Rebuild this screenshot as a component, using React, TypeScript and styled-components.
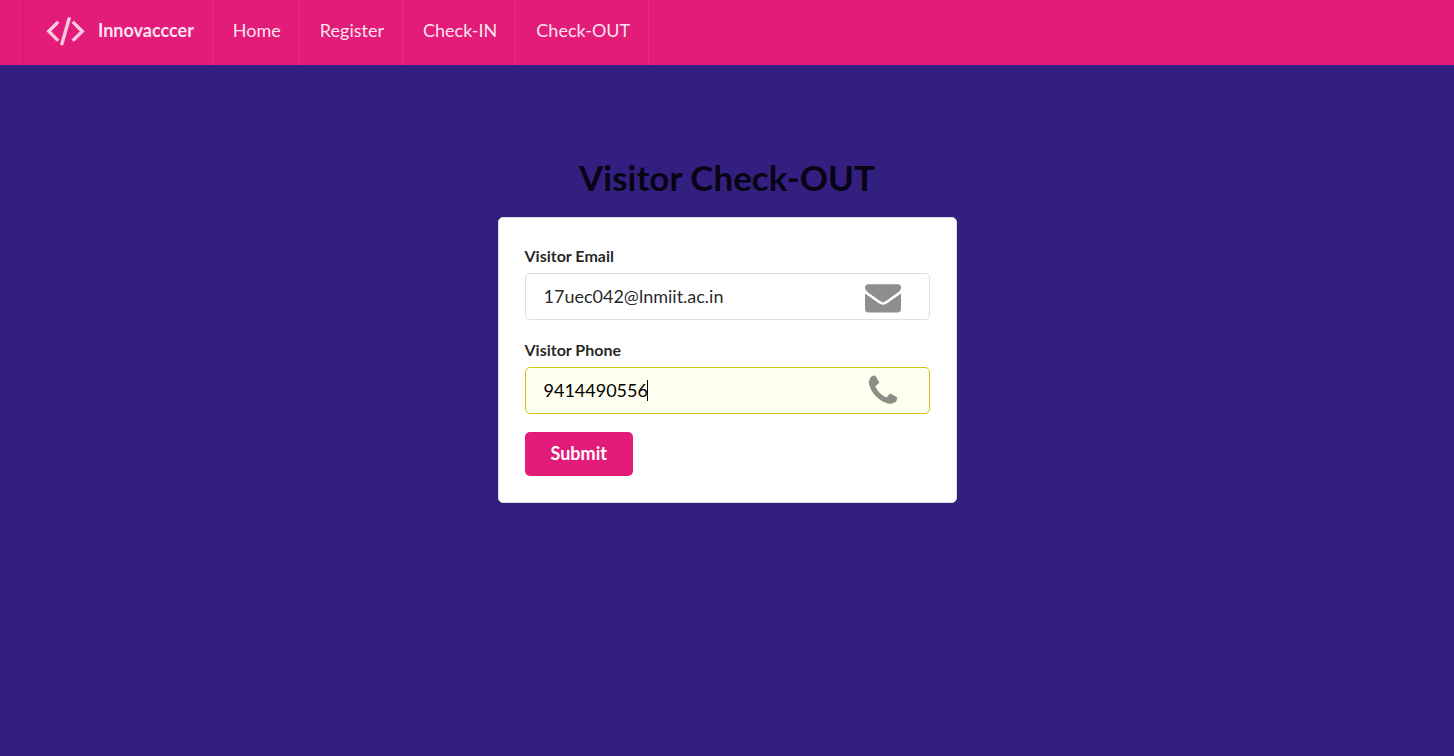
import React, { useState } from "react";
import styled, { createGlobalStyle } from "styled-components";

const GlobalStyle = createGlobalStyle`
  *, *::before, *::after {
    box-sizing: border-box;
  }

  body {
    margin: 0;
    min-height: 100vh;
    background: #331f7f;
    color: rgba(0, 0, 0, 0.87);
    font-family: Lato, "Liberation Sans", sans-serif;
    font-size: 18px;
  }
`;

const NavBar = styled.nav`
  display: flex;
  height: 65px;
  padding-left: 23px;
  background: #e31c79;
`;

const NavItem = styled.a<{ $brand?: boolean }>`
  display: flex;
  align-items: center;
  gap: 13px;
  padding: 0 18px 5px ${(p) => (p.$brand ? "22px" : "20px")};
  border-right: 1px solid rgba(255, 255, 255, 0.08);
  border-left: ${(p) => (p.$brand ? "1px solid rgba(0, 0, 0, 0.06)" : "none")};
  color: rgba(255, 255, 255, 0.9);
  font-weight: ${(p) => (p.$brand ? 700 : 400)};
  line-height: 24px;
  text-decoration: none;
`;

const BrandIcon = styled.svg`
  width: 39px;
  height: 36px;
  fill: currentColor;
  stroke: currentColor;
  stroke-width: 40;
  opacity: 0.85;
`;

const Main = styled.main`
  display: flex;
  flex-direction: column;
  align-items: center;
  padding: 90px 16px;
`;

const Title = styled.h1`
  margin: 0 0 18px;
  color: rgba(0, 0, 0, 0.87);
  font-size: 35px;
  font-weight: 700;
  line-height: 44px;
`;

const Card = styled.form`
  width: 100%;
  max-width: 459px;
  padding: 26px;
  border: 1px solid #dededf;
  border-radius: 5px;
  background: #fff;
  box-shadow: 0 1px 2px rgba(34, 36, 38, 0.15);
`;

const Field = styled.div`
  margin-bottom: 18px;
`;

const Label = styled.label`
  display: block;
  margin-bottom: 5px;
  font-size: 16px;
  font-weight: 700;
  line-height: 24px;
`;

const InputWrap = styled.div`
  position: relative;
`;

const TextInput = styled.input<{ $filled?: boolean }>`
  display: block;
  width: 100%;
  height: 47px;
  padding: 0 72px 2px 18px;
  border: 1px solid ${(p) => (p.$filled ? "#d5c315" : "rgba(34, 36, 38, 0.15)")};
  border-radius: 5px;
  outline: none;
  background: ${(p) => (p.$filled ? "#fffff0" : "#fff")};
  color: ${(p) => (p.$filled ? "#000" : "rgba(0, 0, 0, 0.87)")};
  font: inherit;
`;

const FieldIcon = styled.svg`
  position: absolute;
  top: 6px;
  right: 29px;
  width: 36px;
  height: 36px;
  fill: #000;
  opacity: 0.44;
  pointer-events: none;
`;

const Caret = styled.span`
  position: absolute;
  top: 13px;
  left: 122px;
  width: 1px;
  height: 21px;
  background: #000;
  pointer-events: none;
`;

const SubmitButton = styled.button`
  display: block;
  height: 44px;
  padding: 0 26px 2px;
  border: 0;
  border-radius: 5px;
  background: #e31c79;
  color: #fff;
  font: inherit;
  font-weight: 700;
  cursor: pointer;
`;

const CODE_PATH =
  "M617 1399l-50 50q-10 10-23 10t-23-10l-466-466q-10-10-10-23t10-23l466-466q10-10 23-10t23 10l50 50q10 10 10 23t-10 23l-393 393 393 393q10 10 10 23t-10 23zm591-1067l-373 1291q-4 13-15.5 19.5t-23.5 2.5l-62-17q-13-4-19.5-15.5t-2.5-24.5l373-1291q4-13 15.5-19.5t23.5-2.5l62 17q13 4 19.5 15.5t2.5 24.5zm657 651l-466 466q-10 10-23 10t-23-10l-50-50q-10-10-10-23t10-23l393-393-393-393q-10-10-10-23t10-23l50-50q10-10 23-10t23 10l466 466q10 10 10 23t-10 23z";

const MAIL_PATH =
  "M1792 710v794q0 66-47 113t-113 47h-1472q-66 0-113-47t-47-113v-794q44 49 101 87 362 246 497 345 57 42 92.5 65.5t94.5 48 110 24.5h2q51 0 110-24.5t94.5-48 92.5-65.5q170-123 498-345 57-39 100-87zm0-294q0 79-49 151t-122 123q-376 261-468 325-10 7-42.5 31t-54 38.5-52 32.5-57.5 27-50 9h-2q-23 0-50-9t-57.5-27-52-32.5-54-38.5-42.5-31q-91-64-262-182.5t-205-142.5q-62-42-117-115.5t-55-136.5q0-78 41.5-130t118.5-52h1472q65 0 112.5 47t47.5 113z";

const PHONE_PATH =
  "M1600 1240q0 27-10 70.5t-21 68.5q-21 50-122 106-94 51-186 51-27 0-53-3.5t-57.5-12.5-47-14.5-55.5-20.5-49-18q-98-35-175-83-127-79-264-216t-216-264q-48-77-83-175-3-9-18-49t-20.5-55.5-14.5-47-12.5-57.5-3.5-53q0-92 51-186 56-101 106-122 25-11 68.5-21t70.5-10q14 0 21 3 18 6 53 76 11 19 30 54t35 63.5 31 53.5q3 4 17.5 25t21.5 35.5 7 28.5q0 20-28.5 50t-62 55-62 53-28.5 46q0 9 5 22.5t8.5 20.5 14 24 11.5 19q76 137 174 235t235 174q2 1 19 11.5t24 14 20.5 8.5 22.5 5q18 0 46-28.5t53-62 55-62 50-28.5q14 0 28.5 7t35.5 21.5 25 17.5q25 15 53.5 31t63.5 35 54 30q70 35 76 53 3 7 3 21z";

const links = ["Home", "Register", "Check-IN", "Check-OUT"];

export default function App() {
  const [email, setEmail] = useState("17uec042@lnmiit.ac.in");
  const [phone, setPhone] = useState("9414490556");

  return (
    <>
      <GlobalStyle />
      <NavBar>
        <NavItem href="#" $brand>
          <BrandIcon viewBox="0 0 1920 1792" aria-hidden="true">
            <path d={CODE_PATH} />
          </BrandIcon>
          Innovacccer
        </NavItem>
        {links.map((name) => (
          <NavItem key={name} href={`#${name.toLowerCase()}`}>
            {name}
          </NavItem>
        ))}
      </NavBar>
      <Main>
        <Title>Visitor Check-OUT</Title>
        <Card onSubmit={(e) => e.preventDefault()}>
          <Field>
            <Label htmlFor="email">Visitor Email</Label>
            <InputWrap>
              <TextInput
                id="email"
                type="text"
                value={email}
                onChange={(e) => setEmail(e.target.value)}
              />
              <FieldIcon viewBox="0 0 1792 1792" aria-hidden="true">
                <path d={MAIL_PATH} />
              </FieldIcon>
            </InputWrap>
          </Field>
          <Field>
            <Label htmlFor="phone">Visitor Phone</Label>
            <InputWrap>
              <TextInput
                id="phone"
                type="tel"
                $filled
                value={phone}
                onChange={(e) => setPhone(e.target.value)}
              />
              <Caret />
              <FieldIcon viewBox="0 0 1792 1792" aria-hidden="true">
                <path d={PHONE_PATH} />
              </FieldIcon>
            </InputWrap>
          </Field>
          <SubmitButton type="submit">Submit</SubmitButton>
        </Card>
      </Main>
    </>
  );
}
